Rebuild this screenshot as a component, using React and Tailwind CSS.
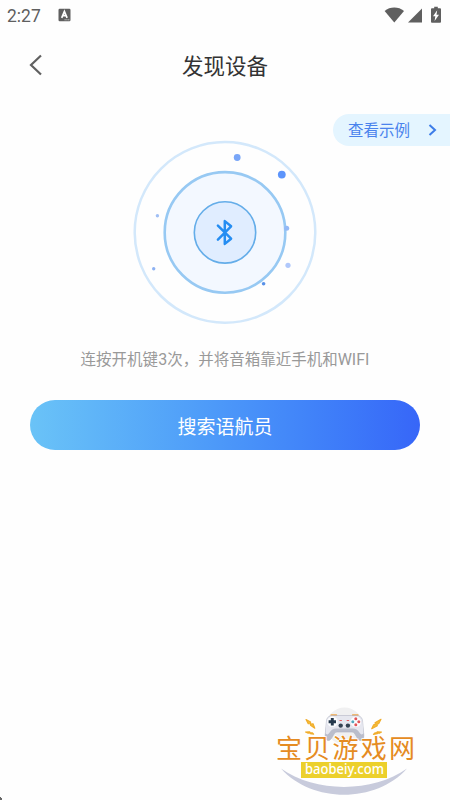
function StatusBar() {
  return (
    <div className="flex h-8 items-center pl-[7px] pr-[8px] text-[#5f5f5f]">
      <span className="w-[51px] font-[Roboto,sans-serif] text-[17.5px] leading-8">2:27</span>
      <svg className="-mt-[2px]" width="13" height="14" viewBox="0 0 13 14">
        <rect x="0.5" y="0.7" width="12" height="12.6" rx="1.2" fill="#5f5f5f" />
        <path d="M3.7 9.8 6.4 3.5 9.1 9.8M4.7 7.7h3.4" fill="none" stroke="#fff" strokeWidth="1.7" />
        <path d="M6.5 11.8h5" stroke="#ccc" strokeWidth="0.9" strokeDasharray="1.3 .5" />
      </svg>
      <svg className="-mt-[2px] ml-auto" width="58" height="18" viewBox="0 0 58 18">
        <g fill="#5f5f5f">
          <path d="M0.6 5C6 .4 14.500.4 20 5L10.300 16.500Z" />
          <path d="M38 2.500v14H24Z" />
          <path d="M50.200.7h3.600v1.600h2.300q.9 0 .9.9v12.600q0 .9-.9.9h-8.200q-.9 0-.9-.9V3.200q0-.9.9-.9h2.300Z" />
        </g>
        <path d="M53.200 4.300 49 10.300h2.300l-.7 4.800 4.400-6.400h-2.500Z" fill="#fff" />
      </svg>
    </div>
  );
}

function Radar() {
  return (
    <svg className="mx-auto block" width="190" height="190" viewBox="130 137 190 190">
      <circle cx="225" cy="232.400" r="90.300" fill="none" stroke="#d3e8fb" strokeWidth="2.500" />
      <circle cx="225" cy="232.400" r="60.300" fill="#f3f8ff" stroke="#97c9f3" strokeWidth="2.600" />
      <circle cx="225" cy="232.400" r="30.700" fill="#e0edff" stroke="#64ade9" strokeWidth="1.600" />
      <path
        d="m217.900 225.600 13.200 13.100-6.300 5.200v-22.800l6.300 5.200-13.200 13.300"
        fill="none" stroke="#258df2" strokeWidth="2.500" strokeLinejoin="round" strokeLinecap="round"
      />
      <circle cx="237.200" cy="157.500" r="3.400" fill="#79a6f8" />
      <circle cx="281.800" cy="174.600" r="3.900" fill="#5c94fb" />
      <circle cx="157.400" cy="215.700" r="1.700" fill="#a0bff5" />
      <circle cx="153.700" cy="268.800" r="1.700" fill="#8db1f2" />
      <circle cx="286.700" cy="228.200" r="2.500" fill="#94b9f6" />
      <circle cx="288" cy="265.300" r="2.600" fill="#b0c8fb" />
      <circle cx="263.600" cy="283.700" r="1.800" fill="#5992e8" />
    </svg>
  );
}

function SiteLogo() {
  return (
    <svg className="block" width="160" height="100" viewBox="265 700 160 100">
      <circle cx="344.500" cy="726" r="18.500" fill="#f0f0f1" />
      <path d="M281 768.500C315 793 373 793 407 768.500C376 803.500 312 803.500 281 768.500Z" fill="#c8cbdc" />
      <g fill="#f6bd35" stroke="#f0ad2c" strokeWidth="1.100" strokeLinejoin="round">
        <path d="m306 719.500 4.600 2.500v2l2.500-.2 1.700 4.400-4.300-2.900-.1-1.800-2.200.2Z" />
        <path d="m305.500 732 4.200-.3.600 1.200 1.900-.2 1.500 1.400-3.500-.5-.5-.8-1.500.4Z" />
        <path d="m381 719.300-6 3.400.4 1.700-1.800.3-1.900 4.100 5.600-3.100-.2-1.700 1.700-.4Z" />
        <path d="m381.500 732-4.300-.3-.5 1.100-1.800.1-1.500 1.500 3.800-.6.600-.8 1.600.2Z" />
      </g>
      <path d="M330.500 716v-1.200q0-.8.8-.8h5q.8 0 .8.800v1.200M352 716v-1.200q0-.8.800-.8h5q.8 0 .8.800v1.200" fill="#efb973" />
      <path
        d="M332 715.700h25c3.300 0 5 2 5.500 5l1.300 14.300c.3 3-1 5.500-3.300 5.500-3.600 0-4.800-8.500-8.500-8.500h-15c-3.700 0-4.900 8.500-8.500 8.500-2.300 0-3.600-2.500-3.300-5.500l1.300-14.300c.5-3 2.200-5 5.500-5Z"
        fill="#babdcb" stroke="#b0b3c2" strokeWidth=".6"
      />
      <path d="M332 715.900h25c3.600 0 5.300 2.600 5.700 6.300l.7 10.800c-1 2.400-3 1.400-4.200-.7-1.300-2.200-3.400-3.700-6.500-3.700h-16.400c-3.100 0-5.200 1.500-6.500 3.700-1.200 2.100-3.200 3.100-4.200.7l.7-10.800c.4-3.700 2.100-6.300 5.700-6.300Z" fill="#e6e7ef" />
      <circle cx="332.500" cy="721.700" r="5.300" fill="#fbfcfe" />
      <circle cx="355.800" cy="721.700" r="5.300" fill="#fbfcfe" />
      <path d="M332.300 718v7.400M328.600 721.700h7.400" stroke="#25384c" strokeWidth="2.900" />
      <circle cx="340.700" cy="725.600" r="2.200" fill="#344252" />
      <circle cx="347.900" cy="725.600" r="2.200" fill="#344252" />
      <path d="M339.500 720.500h2.400M346.700 720.500h2.400" stroke="#e65f63" strokeWidth="1.200" />
      <circle cx="355.800" cy="718.700" r="1.500" fill="#e25559" />
      <circle cx="355.800" cy="724.700" r="1.500" fill="#e25559" />
      <circle cx="352.800" cy="721.700" r="1.500" fill="#54a7bd" />
      <circle cx="358.800" cy="721.700" r="1.500" fill="#e25559" />
      <text
        x="276" y="758" textLength="139" lengthAdjust="spacing" fill="#e58b22" fontSize="26"
        stroke="#fff" strokeWidth="1.500" paintOrder="stroke"
        className="font-['Noto_Sans_CJK_SC',sans-serif] font-normal"
      >宝贝游戏网</text>
      <rect x="301" y="762" width="86" height="16" fill="#ecd02c" />
      <text
        x="305" y="774" textLength="79" lengthAdjust="spacingAndGlyphs" fill="#fff" fontSize="14"
        className="font-['Noto_Sans',sans-serif] font-medium"
      >baobeiy.com</text>
    </svg>
  );
}

export default function App() {
  return (
    <div className="flex h-[800px] w-[450px] flex-col overflow-hidden bg-[#fefefe] font-[Roboto,'Noto_Sans_CJK_SC',sans-serif]">
      <StatusBar />
      <header className="grid h-[68px] grid-cols-[60px_1fr_60px] items-center">
        <svg className="ml-[29px] -mt-[2px]" width="14" height="22" viewBox="0 0 14 22">
          <path d="M12 1.500 2 11l10 9.500" fill="none" stroke="#606060" strokeWidth="2.200" />
        </svg>
        <h1 className="pt-[2px] text-center text-[21.5px] leading-8 text-[#333]">发现设备</h1>
      </header>
      <button className="mt-[14px] flex h-8 w-[117px] items-center self-end rounded-l-full bg-[#e4f5ff] pl-[15px] text-[15.5px] text-[#4a83ed]">
        <span className="pt-1">查看示例</span>
        <svg className="ml-[18px]" width="9" height="12" viewBox="0 0 9 12">
          <path d="m1.500 1 5.500 5-5.500 5" fill="none" stroke="#3c7ce8" strokeWidth="2" />
        </svg>
      </button>
      <main className="-mt-[9px] flex flex-col">
        <Radar />
        <p className="mt-[21px] text-center text-[15.5px] leading-6 text-[#999]">
          连按开机键<span className="text-[16px]">3</span>次，并将音箱靠近手机和<span className="text-[16px]">WIFI</span>
        </p>
        <button className="mx-[30px] mt-[28px] h-[50px] rounded-full bg-linear-to-r from-[#6ac3f7] to-[#3766f8] pt-[7px] text-[19px] text-white">搜索语航员</button>
      </main>
      <footer className="mt-auto flex items-end justify-between pr-[25px]">
        <svg width="3" height="3" viewBox="0 0 3 3"><path d="M0 0h1v1h1v2H0Z" fill="#666" /></svg>
        <SiteLogo />
      </footer>
    </div>
  );
}
